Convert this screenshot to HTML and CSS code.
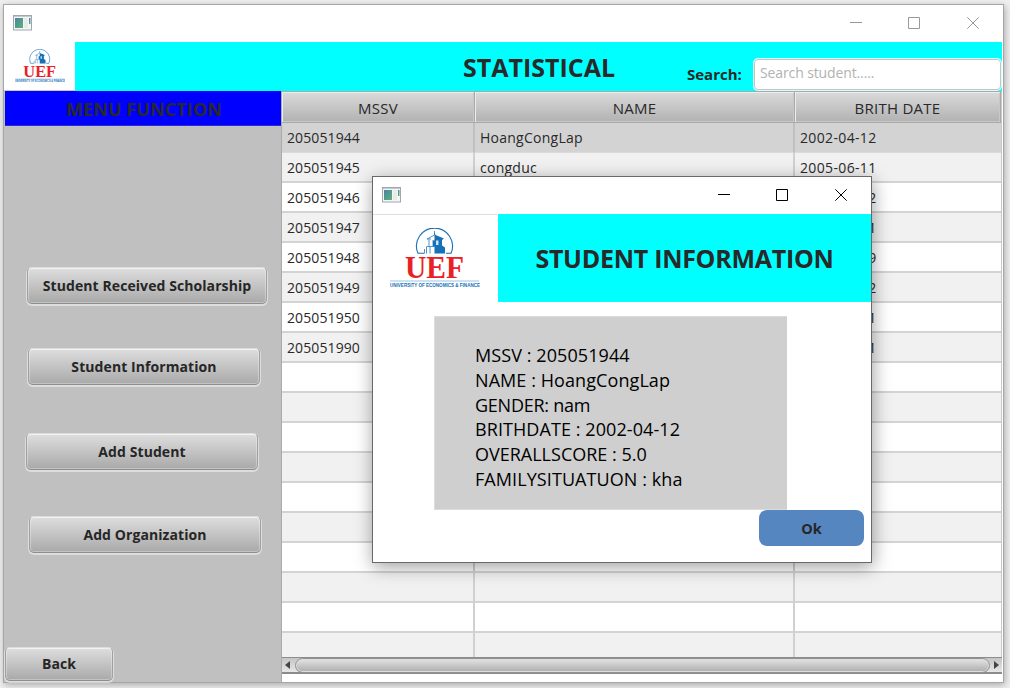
FILE: index.html
```html
<!DOCTYPE html>
<html lang="en">
<head>
<meta charset="utf-8">
<title>Statistical</title>
<link rel="stylesheet" href="styles.css">
</head>
<body>
<svg width="0" height="0" class="defs">
  <defs>
    <linearGradient id="pane" x1="0" y1="0" x2="1" y2="1"><stop offset="0" stop-color="#4d80a8"/><stop offset="1" stop-color="#5bb573"/></linearGradient>
    <symbol id="app" viewBox="0 0 19 16">
      <rect x=".5" y=".5" width="18" height="14.5" fill="#f4f5f6" stroke="#a2a7ae"/>
      <path d="M1 1.5h17" stroke="#c3c8ce"/>
      <rect x="2" y="3" width="8" height="10" fill="url(#pane)"/>
      <rect x="11" y="3" width="4" height="10" fill="#e9ebeb"/>
      <rect x="16" y="3" width="1.5" height="6" fill="url(#pane)"/>
    </symbol>
    <symbol id="uef" viewBox="0 0 90 62">
      <path d="M34 25.300h-6A18 18 0 1 1 61 25.300h-5" fill="none" stroke="#1a72b8" stroke-width="1.100"/>
      <path d="M44.500 3v4L37 11h4M39 11.500v6.500M43 12v6M37 18.500h7M36.500 18.500v7M40 19v6.500M34.500 21v4.500" fill="none" stroke="#3a86c2" stroke-width=".9"/>
      <path d="M44.500 4l1 3 8.500 3.500-2 1.500v5.500l3 2v6h-10.500v-7h-1.500v-6h1.500z" fill="#1471b8"/>
      <path d="M46 12.500h2.500v4.500H46z" fill="#cfe3f1"/>
      <text x="44.500" y="49.700" text-anchor="middle" textLength="59" lengthAdjust="spacingAndGlyphs" class="uef-name">UEF</text>
      <path d="M0 53h89" stroke="#bcd9ec" stroke-width="1.300"/>
      <text x="0" y="59.300" textLength="90" lengthAdjust="spacingAndGlyphs" class="uef-sub">UNIVERSITY OF ECONOMICS &amp; FINANCE</text>
    </symbol>
    <symbol id="controls" viewBox="0 0 130 14">
      <path d="M0 6.500h12M58.500 1.500h11v11h-11zM117.300 1.300l11.400 11.400M128.700 1.300l-11.400 11.400" fill="none" stroke="currentColor" stroke-width="1"/>
    </symbol>
  </defs>
</svg>

<main class="window">
  <div class="titlebar">
    <svg class="app-icon"><use href="#app"/></svg>
    <svg class="controls"><use href="#controls"/></svg>
  </div>
  <header class="banner">
    <div class="logo"><svg class="logo-small"><use href="#uef"/></svg></div>
    <h1 class="banner-title">STATISTICAL</h1>
    <label class="search-label">Search:</label>
    <div class="search">Search student.....</div>
  </header>
  <div class="content">
    <nav class="sidebar">
      <h2 class="menu-title"><span>MENU FUNCTION</span></h2>
      <button class="btn b1">Student Received Scholarship</button>
      <button class="btn b2">Student Information</button>
      <button class="btn b3">Add Student</button>
      <button class="btn b4">Add Organization</button>
      <button class="btn back">Back</button>
    </nav>
    <section class="table-pane">
      <div class="rows">
        <div class="row head"><div>MSSV</div><div>NAME</div><div>BRITH DATE</div></div>
        <div class="row selected"><div>205051944</div><div>HoangCongLap</div><div>2002-04-12</div></div>
        <div class="row odd"><div>205051945</div><div>congduc</div><div>2005-06-11</div></div>
        <div class="row"><div>205051946</div><div></div><div>2002-04-12</div></div>
        <div class="row odd"><div>205051947</div><div></div><div>2002-04-11</div></div>
        <div class="row"><div>205051948</div><div></div><div>2002-04-19</div></div>
        <div class="row odd"><div>205051949</div><div></div><div>2002-04-12</div></div>
        <div class="row"><div>205051950</div><div></div><div>2002-04-11</div></div>
        <div class="row odd"><div>205051990</div><div></div><div>2002-04-11</div></div>
        <div class="row"><div></div><div></div><div></div></div>
        <div class="row odd"><div></div><div></div><div></div></div>
        <div class="row"><div></div><div></div><div></div></div>
        <div class="row odd"><div></div><div></div><div></div></div>
        <div class="row"><div></div><div></div><div></div></div>
        <div class="row odd"><div></div><div></div><div></div></div>
        <div class="row"><div></div><div></div><div></div></div>
        <div class="row odd"><div></div><div></div><div></div></div>
        <div class="row"><div></div><div></div><div></div></div>
        <div class="row odd"><div></div><div></div><div></div></div>
      </div>
      <div class="scrollbar"><i class="arrow left"></i><div class="thumb"></div><i class="arrow right"></i></div>
    </section>
  </div>
</main>

<section class="dialog">
  <div class="titlebar">
    <svg class="app-icon"><use href="#app"/></svg>
    <svg class="controls"><use href="#controls"/></svg>
  </div>
  <header class="dialog-head">
    <div class="dialog-logo"><svg class="logo-large"><use href="#uef"/></svg></div>
    <h2 class="dialog-title"><span>STUDENT INFORMATION</span></h2>
  </header>
  <div class="info">
    <p class="wide">MSSV : 205051944</p>
    <p class="wide">NAME : HoangCongLap</p>
    <p class="tight">GENDER: nam</p>
    <p class="wide">BRITHDATE : 2002-04-12</p>
    <p>OVERALLSCORE : 5.0</p>
    <p class="wide">FAMILYSITUATUON : kha</p>
  </div>
  <button class="ok">Ok</button>
</section>
</body>
</html>
```
FILE: styles.css
```css
* { box-sizing: border-box; }
body {
  display: flow-root;
  margin: 0;
  width: 1010px;
  height: 688px;
  overflow: hidden;
  background: #f0f0f0;
  font-family: "Open Sans", "Noto Sans", sans-serif;
  font-size: 14px;
  color: #292929;
  position: relative;
}
h1, h2, p { margin: 0; }
button { font-family: inherit; padding: 0; color: #262626; }
.defs { position: absolute; }
.window {
  width: 1001px;
  height: 679px;
  margin: 4px 0 0 3px;
  background: #fff;
  border: 1px solid #a6a6a6;
  box-shadow: 1px 2px 7px rgba(0, 0, 0, .3);
  display: flex;
  flex-direction: column;
}
.titlebar {
  height: 37px;
  flex: none;
  display: flex;
  justify-content: space-between;
  align-items: flex-start;
  padding: 10px 23px 0 9px;
  color: #999;
}
.app-icon { width: 19px; height: 16px; }
.controls { width: 130px; height: 14px; margin-top: 1px; }
.banner {
  height: 49px;
  flex: none;
  display: flex;
  margin-right: 1px;
  background: #0ff;
}
.logo { width: 71px; background: #fff; border-bottom: 1px solid #c8c8c8; padding: 7px 0 0 11px; }
.logo-small { width: 50px; height: 35px; display: block; }
.uef-name { font: bold 31px "Liberation Serif", serif; fill: #ea2027; }
.uef-sub { font: bold 4.800px "Liberation Sans", sans-serif; fill: #1471b8; }
.banner-title {
  margin-left: 388px;
  width: 224px;
  font-size: 25px;
  line-height: 51px;
  white-space: nowrap;
}
.search-label { width: 67px; font-size: 15px; font-weight: 700; line-height: 65px; white-space: nowrap; }
.search {
  margin-top: 17px;
  width: 247px;
  height: 31px;
  border: 1px solid #c4c4c4;
  border-radius: 4px;
  background: #fff;
  box-shadow: 0 0 0 1px #d5ffff;
  padding-left: 5px;
  line-height: 25px;
  letter-spacing: -.12px;
  color: #b2b2b2;
}
.content { flex: 1; min-height: 0; display: flex; }
.sidebar {
  width: 278px;
  padding-left: 1px;
  background: #c0c0c0;
  border-right: 1px solid #aaa;
  display: flex;
  flex-direction: column;
  align-items: flex-start;
}
.menu-title {
  width: 276px;
  height: 35px;
  background: #00f;
  border-bottom: 1px solid #2a2ad8;
  text-align: center;
  padding-left: 2px;
  font-size: 18px;
  letter-spacing: .1px;
  line-height: 37px;
}
.btn {
  flex: none;
  height: 37px;
  width: 232px;
  border: 1px solid;
  border-color: #dcdcdc #a0a0a0 #8e8e8e #a0a0a0;
  border-radius: 5px;
  background: linear-gradient(#dedede, #a9a9a9);
  box-shadow: 0 1px 0 1px rgba(240, 240, 240, .6), inset 0 0 0 1px rgba(255, 255, 255, .3), inset 0 1px 0 #ededed;
  font-size: 14px;
  font-weight: 700;
  letter-spacing: .08px;
  line-height: 34px;
}
.b1 { width: 240px; margin: 141px 0 0 22px; }
.b2 { margin: 44px 0 0 23px; }
.b3 { margin: 48px 0 0 21px; }
.b4 { margin: 46px 0 0 24px; }
.back { width: 108px; height: 34px; margin-top: 94px; line-height: 32px; }
.table-pane { width: 720px; display: flex; flex-direction: column; }
.rows { height: 566px; overflow: hidden; border-right: 1px solid #c8c8c8; }
.row { display: grid; grid-template-columns: 193px 320px 1fr; grid-template-rows: 100%; height: 30px; background: #fff; }
.row > div { border-right: 2px solid #d0d0d0; border-bottom: 2px solid #d3d3d3; padding-left: 5px; line-height: 29px; letter-spacing: .1px; }
.row > div:nth-child(2) { letter-spacing: .25px; }
.row > div:last-child { border-right: 0; letter-spacing: .35px; }
.row.odd { background: #f1f1f1; }
.row.selected { background: #d3d3d3; height: 30px; }
.row.selected > div { border-right-color: #c0c0c0; line-height: 30px; border-bottom: 1px solid #dadada; }
.row.head { height: 32px; background: linear-gradient(#dcdcdc, #b0b0b0); }
.row.head > div {
  border: 1px solid #a9a9a9;
  border-left: 0;
  box-shadow: inset 1px 1px 0 #ededed, inset -1px -1px 0 #c8c8c8;
  padding: 0;
  text-align: center;
  font-size: 15px;
  letter-spacing: .25px;
  line-height: 33px;
}
.scrollbar {
  height: 17px;
  display: flex;
  align-items: center;
  justify-content: space-between;
  padding: 0 3px;
  background: linear-gradient(#c5c5c5, #e6e6e6);
  border: 1px solid #8c8c8c;
  border-width: 1px 0 2px;
}
.thumb { width: 695px; height: 15px; border: 1px solid #929292; border-radius: 8px; background: linear-gradient(#e4e4e4, #acacac); box-shadow: inset 0 0 0 1px #ddd; }
.arrow { border: 4px solid transparent; }
.arrow.left { border-left: 0; border-right: 5px solid #444; }
.arrow.right { border-right: 0; border-left: 5px solid #444; }
.dialog {
  position: absolute;
  left: 372px;
  top: 176px;
  width: 500px;
  height: 387px;
  background: #fff;
  border: 1px solid #696969;
  box-shadow: 1px 4px 17px rgba(0, 0, 0, .38);
  color: #000;
}
.dialog .titlebar { color: #000; }
.dialog-head { height: 88px; display: flex; }
.dialog-logo { width: 124px; margin-right: 1px; border-top: 1px solid #ddd; padding: 13px 0 0 17px; }
.logo-large { width: 90px; height: 62px; display: block; }
.dialog-title { flex: 1; background: #0ff; color: #292929; font-size: 25px; letter-spacing: -.28px; line-height: 89px; text-align: center; white-space: nowrap; }
.info {
  width: 353px;
  height: 194px;
  margin: 14px 0 0 61px;
  padding: 26px 0 0 40px;
  background: #cfcfcf;
  border: 1px solid #dcdcdc;
  border-width: 1px 0 1px 1px;
  font-size: 18px;
  line-height: 24.800px;
  white-space: nowrap;
}
.wide { letter-spacing: .08px; }
.tight { letter-spacing: -.25px; }
.ok {
  display: block;
  width: 105px;
  height: 36px;
  margin-left: 386px;
  border: 0;
  border-radius: 8px;
  background: #5586bf;
  font-size: 14.500px;
  font-weight: 700;
}
```
